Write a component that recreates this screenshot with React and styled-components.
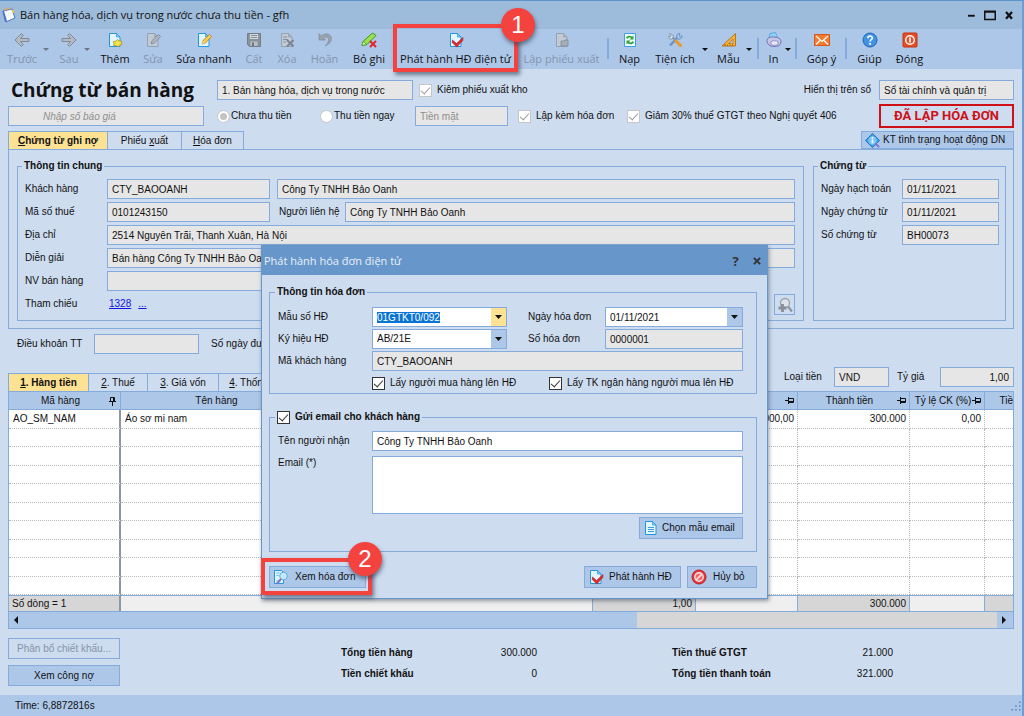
import { useEffect, useRef } from "react";
import styled, { createGlobalStyle } from "styled-components";

const formFont = `"Liberation Sans", Arial, sans-serif`;
const uiFont = `"Open Sans", "Noto Sans", sans-serif`;

const GlobalStyle = createGlobalStyle`
  * {
    box-sizing: border-box;
  }
  body {
    margin: 0;
    color: #111;
    font-family: ${formFont};
    font-size: 10px;
    line-height: 14px;
  }
  button, input, select, textarea {
    margin: 0;
    color: inherit;
    font: inherit;
  }
  svg {
    flex: none;
  }
`;

const Window = styled.div`
  position: relative;
  display: flex;
  flex-direction: column;
  min-height: 100vh;
  border-top: 1px solid #5f93cb;
  border-right: 2px solid #6f9cd2;
  background: #cddcef;
  overflow: hidden;
`;

const TitleBar = styled.header`
  display: flex;
  align-items: center;
  gap: 4px;
  height: 28px;
  padding: 0 4px 0 0;
  background: #9dbbda;
  font-family: ${uiFont};
  font-size: 11px;
`;

const WindowName = styled.span`
  flex: 1;
`;

const WindowButton = styled.button`
  display: flex;
  width: 15px;
  padding: 0;
  border: 0;
  background: none;
`;

const Toolbar = styled.nav`
  display: flex;
  height: 40px;
  padding-left: 1px;
  background: #adc7e9;
  font-family: ${uiFont};
  font-size: 11px;
`;

const ToolWrap = styled.div`
  position: relative;
  width: ${props => props.$width}px;
`;

const ToolButton = styled.button`
  display: flex;
  flex-direction: column;
  align-items: center;
  gap: 4px;
  width: 100%;
  height: 100%;
  padding: 3px 0 0;
  border: 0;
  background: none;
  white-space: nowrap;

  &:disabled {
    color: #8594aa;
  }
`;

const ToolCaret = styled.button`
  width: ${props => props.$width}px;
  padding: 0;
  border: 0;
  background: none;

  &::before {
    content: "";
    display: block;
    width: 0;
    border: 3px solid transparent;
    border-top-color: ${props => (props.$muted ? "#6b7787" : "#111")};
    border-bottom: 0;
  }
`;

const ToolSeparator = styled.div`
  width: ${props => props.$width}px;

  &::before {
    content: "";
    display: block;
    width: 2px;
    height: 21px;
    margin: 9px auto 0;
    background: #84abdc;
  }
`;

const Callout = styled.div`
  position: absolute;
  z-index: 2;
  inset: ${props => props.$inset};
  border: 4px solid #f4433f;
  box-shadow: 2px 3px 4px rgba(50, 60, 80, 0.6);
  pointer-events: none;
`;

const CalloutNumber = styled.span`
  position: absolute;
  top: -20px;
  right: ${props => props.$right}px;
  width: 34px;
  height: 34px;
  border-radius: 50%;
  background: #f4433f;
  box-shadow: 1px 3px 4px rgba(50, 60, 80, 0.6);
  color: #fff;
  font-size: 24px;
  line-height: 34px;
  font-family: ${formFont};
  text-align: center;
`;

const Main = styled.main`
  flex: 1;
  display: flex;
  flex-direction: column;
  padding: 9px 8px;
`;

const HeadRow = styled.div`
  display: flex;
  align-items: center;
  height: 24px;
  margin-bottom: 2px;
  white-space: nowrap;
`;

const PageTitle = styled.h1`
  width: 209px;
  margin: 0;
  padding-left: 3px;
  font-family: ${uiFont};
  font-size: 19px;
  line-height: 24px;
`;

const Field = styled.input`
  flex: ${props => (props.$width ? "none" : "1")};
  width: ${props => (props.$width ? `${props.$width}px` : "auto")};
  min-width: 0;
  height: 20px;
  padding: 0 4px;
  border: 1px solid #84abdc;
  border-radius: 0;
  outline: 0;
  background: ${props => (props.$editable ? "#fff" : "#e6e6e6")};
  text-align: ${props => props.$align || "left"};

  &::placeholder {
    color: #8f8f8f;
    opacity: 1;
  }
  &::selection {
    background: #0a74d4;
    color: #fff;
  }
`;

const QuoteField = styled(Field)`
  margin-right: 13px;
  padding-left: 34px;
  font-style: italic;
`;

const Choice = styled.label`
  display: flex;
  align-items: center;
  gap: ${props => props.$gap || 5}px;
  min-width: ${props => props.$width || 0}px;
`;

const CheckBox = styled.input`
  appearance: none;
  flex: none;
  width: 13px;
  height: 13px;
  border: 1px solid #333;
  background: #fff;

  &:checked::before {
    content: "";
    display: block;
    width: 8px;
    height: 4px;
    margin: 2px 0 0 1px;
    border: solid #333;
    border-width: 0 0 1px 1px;
    transform: rotate(-48deg);
  }
  &:disabled {
    border-color: #c6c6c6;
  }
  &:disabled::before {
    border-color: #999;
  }
`;

const Radio = styled.input`
  appearance: none;
  flex: none;
  width: 13px;
  height: 13px;
  padding: 2px;
  border: 1px solid #c3c6ca;
  border-radius: 50%;
  background: #fff;

  &:checked::before {
    content: "";
    display: block;
    width: 7px;
    height: 7px;
    border-radius: 50%;
    background: #c4c4c4;
  }
`;

const RightGroup = styled.div`
  display: flex;
  align-items: center;
  align-self: ${props => (props.$top ? "flex-start" : "center")};
  gap: 8px;
  margin-left: auto;
`;

const Stamp = styled.strong`
  width: 135px;
  margin-left: auto;
  border: 2px solid #cf1018;
  color: #cf1018;
  font-family: Roboto, sans-serif;
  font-size: 13px;
  line-height: 20px;
  text-align: center;
`;

const TabRow = styled.div`
  display: flex;
  align-items: flex-end;
  height: ${props => props.$height}px;
  margin-top: ${props => props.$top}px;
`;

const Tab = styled.button`
  width: ${props => props.$width}px;
  height: 18px;
  padding: 0;
  border: 1px solid #84abdc;
  border-width: 1px 1px 0 0;
  background: ${props => (props.$active ? "#fde293" : "#cddcef")};
  font-weight: ${props => (props.$active ? "bold" : "normal")};
  white-space: nowrap;

  &:first-child {
    border-left-width: 1px;
  }
`;

const ActionButton = styled.button`
  display: flex;
  align-items: center;
  justify-content: ${props => (props.$centered ? "center" : "flex-start")};
  gap: ${props => props.$gap || 3}px;
  width: ${props => props.$width}px;
  height: ${props => props.$height || 22}px;
  margin-left: ${props => (props.$push ? "auto" : 0)};
  padding: 0 3px;
  border: 1px solid #84abdc;
  background: #adc7e9;
  white-space: nowrap;

  &:disabled {
    background: #cddcef;
    color: #8594aa;
  }
`;

const TabPanel = styled.section`
  display: flex;
  gap: 9px;
  padding: 9px 7px 7px 8px;
  border: 1px solid #84abdc;
`;

const Group = styled.fieldset`
  flex: ${props => (props.$width ? "none" : "1")};
  width: ${props => (props.$width ? `${props.$width}px` : "auto")};
  min-width: 0;
  margin: 0;
  padding: ${props => props.$padding};
  border: 1px solid #84abdc;
`;

const Legend = styled.legend`
  display: flex;
  align-items: center;
  height: 14px;
  margin-left: -3px;
  padding: 0 2px;
  font-weight: bold;
  white-space: nowrap;
`;

const Rows = styled.div`
  display: grid;
  grid-template-columns: minmax(0, 1fr);
  gap: ${props => props.$gap || 2}px;
`;

const Row = styled.div`
  display: flex;
  align-items: center;
  height: 20px;
  white-space: nowrap;
`;

const Label = styled.label`
  flex: none;
  width: ${props => (props.$width ? `${props.$width}px` : "auto")};
  margin-left: ${props => props.$left || 0}px;
  white-space: nowrap;
`;

const Links = styled.div`
  display: flex;
  flex: 1;
  gap: 7px;
  padding-left: 2px;

  a {
    color: #1313e8;
  }
`;

const IconButton = styled.button`
  display: flex;
  width: 21px;
  height: 21px;
  padding: 2px;
  border: 1px solid #84abdc;
  background: #cddcef;
`;

const Gap = styled.span`
  flex: none;
  width: ${props => props.$width}px;
`;

const TermsRow = styled(Row)`
  margin-top: 5px;
  padding-left: 9px;
`;

const Grid = styled.section`
  flex: 1;
  display: flex;
  flex-direction: column;
  border: 1px solid #84abdc;
`;

const TableBox = styled.div`
  flex: 1;
  display: grid;
  overflow: hidden;
  background: #fff;
`;

const Table = styled.table`
  width: 100%;
  min-width: 1050px;
  height: 100%;
  border-spacing: 0;
  table-layout: fixed;

  th, td {
    height: 18px;
    padding: 0 3px 0 4px;
    overflow: hidden;
    white-space: nowrap;
  }
  th {
    border-right: 1px solid #84abdc;
    border-bottom: 1px solid #84abdc;
    background: #adc7e9;
    font-weight: normal;
  }
  tbody td {
    border-right: 1px dotted #b9b9b9;
    border-bottom: 1px dotted #b9b9b9;
  }
  tbody td:first-child {
    border-right: 2px solid #8f969e;
  }
  tfoot td {
    height: 16px;
    border-top: 1px solid #84abdc;
    border-right: 1px solid #84abdc;
    background: #efefef;
  }
`;

const HeadCell = styled.div`
  display: flex;
  align-items: center;

  span {
    flex: 1;
    text-align: center;
  }
`;

const NumberCell = styled.td`
  text-align: right;
`;

const SumCell = styled.td`
  &&& {
    background: #d6d6d6;
    text-align: right;
  }
`;

const CountCell = styled.td`
  &&& {
    padding-left: 3px;
    border-right: 2px solid #8f969e;
    background: #d6d6d6;
  }
`;

const ScrollBar = styled.div`
  display: flex;
  height: 17px;
  border-top: 1px solid #84abdc;
  background: #d6d6d6;
`;

const ScrollThumb = styled.div`
  flex: none;
  width: 61%;
  background: #adc7e9;
`;

const ScrollArrow = styled.button`
  flex: none;
  width: 16px;
  margin-left: ${props => (props.$back ? 0 : "auto")};
  padding: 0 5px;
  border: 0;
  background: #adc7e9;

  &::before {
    content: "";
    display: block;
    width: 0;
    border: solid transparent;
    border-width: ${props => (props.$back ? "4px 4px 4px 0" : "4px 0 4px 4px")};
    border-${props => (props.$back ? "right" : "left")}-color: #111;
  }
`;

const Bottom = styled.footer`
  display: flex;
  padding-top: 9px;
`;

const BottomButtons = styled.div`
  display: grid;
  gap: 6px;
`;

const Totals = styled.dl`
  display: grid;
  grid-template-columns: ${props => props.$label}px 80px;
  row-gap: 7px;
  margin: 8px 0 0 ${props => props.$left}px;
  align-content: start;

  dt {
    font-weight: bold;
    white-space: nowrap;
  }
  dd {
    margin: 0;
    text-align: right;
  }
`;

const StatusBar = styled.div`
  display: flex;
  align-items: center;
  justify-content: space-between;
  height: 21px;
  padding-left: 15px;
  background: #adc7e9;
`;

const Dialog = styled.section`
  position: absolute;
  top: 244px;
  left: 261px;
  width: 507px;
  border: 1px solid #6696ca;
  background: #cddcef;
  box-shadow: 1px 2px 4px rgba(50, 60, 80, 0.5);
`;

const DialogTitle = styled.header`
  display: flex;
  align-items: center;
  height: 29px;
  padding: 0 5px 0 2px;
  background: #6696ca;
  color: #e9f1fa;
  font-family: ${uiFont};
  font-size: 11px;

  h2 {
    flex: 1;
    margin: 0;
    font-size: 11px;
    font-weight: normal;
  }
`;

const DialogButton = styled.button`
  width: 11px;
  margin-left: 10px;
  padding: 0;
  border: 0;
  background: none;
  color: #333;
  font-size: 13px;
  font-weight: bold;
`;

const DialogBody = styled.div`
  padding: 10px 10px 10px 7px;
`;

const DialogSection = styled.div`
  display: flex;
  margin-bottom: ${props => props.$bottom}px;
`;

const Combo = styled.div`
  flex: none;
  position: relative;
  display: flex;
  width: ${props => props.$width}px;
  height: 20px;
  border: 1px solid #84abdc;
  background: #fff;
`;

const ComboInput = styled(Field)`
  height: 18px;
  border: 0;
`;

const ComboSelect = styled.select`
  appearance: none;
  flex: 1;
  padding: 0 4px;
  border: 0;
  border-radius: 0;
  background: linear-gradient(#adc7e9, #adc7e9) right / 15px 100% no-repeat;
`;

const ComboButton = styled.button`
  display: grid;
  place-items: center;
  width: 15px;
  padding: 0;
  border: 0;
  background: ${props => (props.$hot ? "#fde293" : "#adc7e9")};
`;

const SelectCaret = styled.span`
  position: absolute;
  right: 0;
  display: grid;
  place-items: center;
  width: 15px;
  height: 18px;
  pointer-events: none;
`;

const EmailBox = styled.textarea`
  flex: 1;
  height: 58px;
  border: 1px solid #84abdc;
  border-radius: 0;
  background: #fff;
  resize: none;
`;

const EmailRow = styled.div`
  display: flex;
  align-items: flex-start;
  margin: 3px 0 1px;
`;

const Actions = styled.div`
  display: flex;
  gap: 6px;
`;

const ButtonSpot = styled.div`
  position: relative;
  margin-right: auto;
`;

function Svg({ size = 16, children }) {
  return (
    <svg width={size} height={size} viewBox="0 0 16 16" fill="none" aria-hidden="true">
      {children}
    </svg>
  );
}

function Sheet({ muted }) {
  const line = muted ? "#96a1b0" : "#2496de";
  return (
    <>
      <path d="M2.5 1.5h7l3.5 3.5v9.5h-10.5z" fill={muted ? "#c2cad5" : "#e3f5ff"} stroke={line} />
      <path d="M9.5 1.5v3.5h3.5z" fill={muted ? "#a9b3c0" : "#8fd0f5"} stroke={line} strokeWidth=".7" />
    </>
  );
}

const icons = {
  app: (
    <Svg>
      <path d="M3 4l9-2 3 9-9 4z" fill="#f4f9ff" stroke="#4b72c9" />
      <path d="M2.500 4l2.500 11 2-1-3-10z" fill="#4f6fd0" />
      <path d="M4.500 3.600l1-2M7 3l1-2M9.500 2.500l1-2" stroke="#e5a93d" strokeWidth="1.200" />
      <path d="M12.500 3l1 3" stroke="#f1c24d" strokeWidth="2" />
    </Svg>
  ),
  back: (
    <Svg>
      <path d="M7.500 1.500L1 8l6.500 6.500 1.800-1.800L6.500 9.500H15v-3H6.500l2.800-3.200z" fill="#b4bbc5" stroke="#7f8894" />
    </Svg>
  ),
  next: (
    <Svg>
      <path d="M8.500 1.500L15 8l-6.500 6.500-1.800-1.800 2.800-3.200H1v-3h8.500L6.700 3.300z" fill="#b4bbc5" stroke="#7f8894" />
    </Svg>
  ),
  add: (
    <Svg>
      <Sheet />
      <path d="M10.500 7.500l1.500 1.400 2.600.2-.5 2 1 1.400-2.400.7-1.600 1.600-1.900-1.300-2.600.1.500-2.100-1-1.700 2.500-.6z" fill="#f6e34a" stroke="#a8951a" strokeWidth=".8" />
    </Svg>
  ),
  edit: (
    <Svg>
      <Sheet muted />
      <path d="M6 12l1-3.500 6.500-6 2 2-6 6.500z" fill="#adb5c0" stroke="#7f8894" strokeWidth=".8" />
    </Svg>
  ),
  quickEdit: (
    <Svg>
      <Sheet />
      <path d="M6 12l1-3.500 6.500-6 2 2-6 6.500z" fill="#f9cf4c" stroke="#b07c1b" strokeWidth=".8" />
      <path d="M6 12l1-3 2 2z" fill="#f6dcb2" />
    </Svg>
  ),
  save: (
    <Svg>
      <path d="M1.500 1.500h13v13h-11l-2-2z" fill="#8a929c" stroke="#747d88" />
      <path d="M4 2h8v5H4z" fill="#cfd5dd" />
      <path d="M5 3.500h6M5 5.500h6" stroke="#8a929c" />
      <path d="M4.500 9.500h7V14h-7z" fill="#b7bec8" />
      <path d="M6 10.500h2V14H6z" fill="#6d7682" />
    </Svg>
  ),
  remove: (
    <Svg>
      <Sheet muted />
      <path d="M4 5h4M4 7.500h5M4 10h3" stroke="#8a929c" />
      <path d="M8 8l6.500 6.500M14.500 8L8 14.500" stroke="#7b8490" strokeWidth="2" />
    </Svg>
  ),
  undo: (
    <Svg>
      <path d="M2 1.500v6.500h6.500L6.400 5.900C9.500 4 12 5.500 11.500 8.500c-.3 2-1.800 4-3.500 5.500 4-1.500 6.800-4.500 6.500-7.700C14 2 8.500.300 4.400 3.900z" fill="#9aa2ad" stroke="#828b97" strokeWidth=".7" />
    </Svg>
  ),
  unpost: (
    <Svg>
      <path d="M1 13.500l1-4L11.500 1l3.500 2.500-9 9z" fill="#9be04e" stroke="#3a9a1c" />
      <path d="M1 13.500l1-4 4 3z" fill="#d9f2c0" stroke="#3a9a1c" strokeWidth=".7" />
      <path d="M9 9l6 6M15 9l-6 6" stroke="#e3262c" strokeWidth="2" />
    </Svg>
  ),
  publish: (
    <Svg>
      <Sheet />
      <path d="M4.500 8l4 3.500 6.500-6-.2 3-6 6.500L4.200 10.500z" fill="#e32b30" stroke="#a3151b" strokeWidth=".6" />
    </Svg>
  ),
  issue: (
    <Svg>
      <Sheet muted />
      <path d="M7 9h3l1-1h3v6H7z" fill="#a7afba" stroke="#7f8894" strokeWidth=".8" />
    </Svg>
  ),
  refresh: (
    <Svg>
      <path d="M2.500 1.500h11v13h-11z" fill="#f2fbff" stroke="#3aa0df" />
      <path d="M11.500 3.500v4h-4l1.500-1.500c-1.500-1-3-.3-3.800 1L4 5.500c1.500-2 4.300-2.400 6.200-.8z" fill="#2fa534" />
      <path d="M4.500 12.500v-4h4L7 10c1.500 1 3 .3 3.800-1l1.200 1.500c-1.500 2-4.300 2.400-6.200.8z" fill="#2fa534" />
    </Svg>
  ),
  tools: (
    <Svg>
      <path d="M3 13.500L11 5" stroke="#6c95c5" strokeWidth="2.500" />
      <path d="M10 2.500c2-1.500 3-1 3-1l-1 2.300 1.400 1L15 3.500s.300 2.500-2 3.500-4-2-3-4.500z" fill="#a8c7e8" stroke="#507fb5" strokeWidth=".7" />
      <path d="M6 6c1-2.500-1-4.500-3.500-4.200L4 3.500 3.200 5 1.500 4.500C1.500 7 4 8 6 6z" fill="#dbe2ea" stroke="#6d7f95" strokeWidth=".7" />
      <path d="M5.500 5.500l3 3" stroke="#8796aa" strokeWidth="2" />
      <path d="M9 9l4.500 4.500" stroke="#e99b25" strokeWidth="3" strokeLinecap="round" />
    </Svg>
  ),
  template: (
    <Svg>
      <path d="M1 14L14.500 1.500V14z" fill="#f4b13c" stroke="#bc7714" />
      <path d="M7.500 11.500l4.500-4.500v4.500z" fill="#adc7e9" stroke="#bc7714" strokeWidth=".8" />
      <path d="M4 14v-2M6.500 14v-1.500M9 14v-1.500M11.500 14v-1.500" stroke="#8a5208" strokeWidth=".7" />
    </Svg>
  ),
  print: (
    <Svg>
      <path d="M3 6l1-4.500 5.500-1 2 5z" fill="#8fd0f5" stroke="#4a9fdc" strokeWidth=".8" />
      <path d="M1 8.500C1 6 3.500 5 6.500 5s8.500.5 8.500 4.500-3 5-7 5-7-2-7-6z" fill="#c5c5e8" stroke="#7574b4" />
      <path d="M5 9.500c2-1 5-1 7 0v3c-2 1-5 1-7 0z" fill="#e9e9fa" stroke="#7574b4" strokeWidth=".7" />
    </Svg>
  ),
  mail: (
    <Svg>
      <path d="M.500 2.500h15v11H.500z" fill="#f47a2c" stroke="#d9571a" />
      <path d="M2 4l6 5.500L14 4M2 12.500l4-4M14 12.500l-4-4" stroke="#fff" strokeWidth="1.200" />
    </Svg>
  ),
  help: (
    <Svg>
      <circle cx="8" cy="8" r="7" fill="#4393e4" stroke="#2065b5" />
      <path d="M5.800 6.300C5.800 3.200 10.400 3.400 10.300 6c0 1.700-2.200 1.700-2.200 3.500" stroke="#fff" strokeWidth="1.600" />
      <circle cx="8.100" cy="11.800" r="1.100" fill="#fff" />
    </Svg>
  ),
  power: (
    <Svg>
      <rect x="1" y="1" width="14" height="14" rx="1" fill="#e84c25" stroke="#c2330f" />
      <circle cx="8" cy="8" r="4.300" stroke="#fff" strokeWidth="1.500" />
      <path d="M8 5.500v5" stroke="#fff" strokeWidth="1.700" />
    </Svg>
  ),
  info: (
    <Svg size={15}>
      <path d="M8 .500L15.500 8 8 15.500.500 8z" fill="#3d9fe8" stroke="#1d6fbe" strokeLinejoin="round" />
      <circle cx="8" cy="8" r="4.500" fill="#7cc4f5" />
      <path d="M8 7v4" stroke="#fff" strokeWidth="1.800" />
      <circle cx="8" cy="5" r="1.100" fill="#fff" />
      <path d="M11 11l4 4" stroke="#7d72c9" strokeWidth="2" />
    </Svg>
  ),
  zoomAdd: (
    <Svg>
      <circle cx="8" cy="6" r="4.500" fill="#dde3ea" stroke="#98a1ad" strokeWidth="1.300" />
      <path d="M11 9.500l4 5" stroke="#8d959f" strokeWidth="2.200" />
      <path d="M5.500 7v8M1.500 11h8" stroke="#868e98" strokeWidth="2.800" />
    </Svg>
  ),
  note: (
    <Svg>
      <Sheet />
      <path d="M5 7.500h6M5 9.500h6M5 11.500h6" stroke="#3aa0df" />
    </Svg>
  ),
  preview: (
    <Svg>
      <path d="M1.500 1.500h7l2 2v11h-9z" fill="#dff3ff" stroke="#2496de" />
      <path d="M3.500 4h3M3.500 6.500h2M3.500 12h3" stroke="#66b8ea" />
      <circle cx="10.500" cy="7" r="3.800" fill="#c6e9fc" stroke="#58aee3" />
      <path d="M8 10l-4 4.500" stroke="#8472d3" strokeWidth="2" />
    </Svg>
  ),
  cancel: (
    <Svg>
      <circle cx="8" cy="8" r="7" fill="#e2383e" stroke="#c01f26" />
      <circle cx="8" cy="8" r="4.200" fill="#ee6a6e" stroke="#fbe3e3" strokeWidth="1.400" />
      <path d="M5 11l6-6" stroke="#fbe3e3" strokeWidth="1.700" />
    </Svg>
  ),
};

function Pin({ upright }) {
  return (
    <svg width="9" height="10" viewBox="0 0 9 10" fill="none" stroke="#111" aria-hidden="true">
      {upright ? (
        <path d="M2.500 5.500v-4h4v4M5.500 1.500v4M1 5.500h7M4.500 6v4" />
      ) : (
        <path d="M3.500 2.500h5v4h-5M3.500 1v7M0 4.500h3.500M4 5.500h5" />
      )}
    </svg>
  );
}

function Caret() {
  return (
    <svg width="7" height="4" viewBox="0 0 7 4" aria-hidden="true">
      <path d="M0 0h7L3.500 4z" fill="#111" />
    </svg>
  );
}

const tools = [
  { name: "Trước", icon: "back", width: 42, disabled: true },
  { caret: true, width: 11, disabled: true },
  { name: "Sau", icon: "next", width: 30, disabled: true },
  { caret: true, width: 10, disabled: true },
  { name: "Thêm", icon: "add", width: 42 },
  { name: "Sửa", icon: "edit", width: 34, disabled: true },
  { name: "Sửa nhanh", icon: "quickEdit", width: 68 },
  { name: "Cất", icon: "save", width: 32, disabled: true },
  { name: "Xóa", icon: "remove", width: 34, disabled: true },
  { name: "Hoãn", icon: "undo", width: 41, disabled: true },
  { name: "Bỏ ghi", icon: "unpost", width: 48 },
  { name: "Phát hành HĐ điện tử", icon: "publish", width: 125, step: 1 },
  { name: "Lập phiếu xuất", icon: "issue", width: 87, disabled: true },
  { separator: true, width: 6 },
  { name: "Nạp", icon: "refresh", width: 37 },
  { name: "Tiện ích", icon: "tools", width: 54 },
  { caret: true, width: 9 },
  { name: "Mẫu", icon: "template", width: 35 },
  { caret: true, width: 8 },
  { separator: true, width: 8 },
  { name: "In", icon: "print", width: 23 },
  { caret: true, width: 7 },
  { separator: true, width: 8 },
  { name: "Góp ý", icon: "mail", width: 43 },
  { separator: true, width: 6 },
  { name: "Giúp", icon: "help", width: 41 },
  { name: "Đóng", icon: "power", width: 39 },
];

function Tool({ tool }) {
  if (tool.separator) return <ToolSeparator $width={tool.width} />;
  if (tool.caret) return <ToolCaret $width={tool.width} $muted={tool.disabled} aria-label="Mở danh sách" />;
  return (
    <ToolWrap $width={tool.width}>
      <ToolButton disabled={tool.disabled}>
        {icons[tool.icon]}
        {tool.name}
      </ToolButton>
      {tool.step && (
        <Callout $inset="-5px 0 -3px 0">
          <CalloutNumber $right={-21}>{tool.step}</CalloutNumber>
        </Callout>
      )}
    </ToolWrap>
  );
}

function Header() {
  return (
    <>
      <HeadRow>
        <PageTitle>Chứng từ bán hàng</PageTitle>
        <Field $width={196} readOnly aria-label="Loại chứng từ" defaultValue="1. Bán hàng hóa, dịch vụ trong nước" />
        <Gap $width={6} />
        <Choice>
          <CheckBox type="checkbox" defaultChecked disabled />
          Kiêm phiếu xuất kho
        </Choice>
        <RightGroup>
          <Label htmlFor="book">Hiển thị trên sổ</Label>
          <Field id="book" $width={135} readOnly defaultValue="Sổ tài chính và quản trị" />
        </RightGroup>
      </HeadRow>
      <HeadRow>
        <QuoteField $width={196} placeholder="Nhập số báo giá" aria-label="Số báo giá" />
        <Choice $width={103} $gap={1}>
          <Radio type="radio" name="payment" defaultChecked disabled />
          Chưa thu tiền
        </Choice>
        <Choice $width={95} $gap={1}>
          <Radio type="radio" name="payment" disabled />
          Thu tiền ngay
        </Choice>
        <Field $width={93} disabled placeholder="Tiền mặt" aria-label="Hình thức thu" />
        <Gap $width={10} />
        <Choice $width={109}>
          <CheckBox type="checkbox" defaultChecked disabled />
          Lập kèm hóa đơn
        </Choice>
        <Choice>
          <CheckBox type="checkbox" defaultChecked disabled />
          Giảm 30% thuế GTGT theo Nghị quyết 406
        </Choice>
        <Stamp>ĐÃ LẬP HÓA ĐƠN</Stamp>
      </HeadRow>
    </>
  );
}

function Voucher() {
  return (
    <>
      <TabRow $height={18} $top={1}>
        <Tab $width={100} $active><u>C</u>hứng từ ghi nợ</Tab>
        <Tab $width={74}>Phiếu <u>x</u>uất</Tab>
        <Tab $width={62}><u>H</u>óa đơn</Tab>
        <ActionButton $width={153} $height={18} $push>
          {icons.info}
          KT tình trạng hoạt động DN
        </ActionButton>
      </TabRow>
      <TabPanel>
        <Group $padding="6px 8px 6px 7px">
          <Legend>Thông tin chung</Legend>
          <Rows $gap={3}>
            <Row>
              <Label $width={82} htmlFor="customer">Khách hàng</Label>
              <Field id="customer" $width={163} readOnly defaultValue="CTY_BAOOANH" />
              <Gap $width={7} />
              <Field readOnly aria-label="Tên khách hàng" defaultValue="Công Ty TNHH Bảo Oanh" />
            </Row>
            <Row>
              <Label $width={82} htmlFor="tax">Mã số thuế</Label>
              <Field id="tax" $width={163} readOnly defaultValue="0101243150" />
              <Label $width={66} $left={9} htmlFor="contact">Người liên hệ</Label>
              <Field id="contact" readOnly defaultValue="Công Ty TNHH Bảo Oanh" />
            </Row>
            <Row>
              <Label $width={82} htmlFor="address">Địa chỉ</Label>
              <Field id="address" readOnly defaultValue="2514 Nguyễn Trãi, Thanh Xuân, Hà Nội" />
            </Row>
            <Row>
              <Label $width={82} htmlFor="note">Diễn giải</Label>
              <Field id="note" readOnly defaultValue="Bán hàng Công Ty TNHH Bảo Oanh" />
            </Row>
            <Row>
              <Label $width={82} htmlFor="seller">NV bán hàng</Label>
              <Field id="seller" $width={163} readOnly />
            </Row>
            <Row>
              <Label as="span" $width={82}>Tham chiếu</Label>
              <Links>
                <a href="#1328">1328</a>
                <a href="#more">...</a>
              </Links>
              <IconButton aria-label="Tìm thêm">{icons.zoomAdd}</IconButton>
            </Row>
          </Rows>
        </Group>
        <Group $width={193} $padding="6px 6px 6px 7px">
          <Legend>Chứng từ</Legend>
          <Rows $gap={3}>
            <Row>
              <Label $width={81} htmlFor="posted">Ngày hạch toán</Label>
              <Field id="posted" readOnly defaultValue="01/11/2021" />
            </Row>
            <Row>
              <Label $width={81} htmlFor="dated">Ngày chứng từ</Label>
              <Field id="dated" readOnly defaultValue="01/11/2021" />
            </Row>
            <Row>
              <Label $width={81} htmlFor="number">Số chứng từ</Label>
              <Field id="number" readOnly defaultValue="BH00073" />
            </Row>
          </Rows>
        </Group>
      </TabPanel>
      <TermsRow>
        <Label $width={77} htmlFor="terms">Điều khoản TT</Label>
        <Field id="terms" $width={105} readOnly />
        <Label $left={12}>Số ngày được nợ</Label>
      </TermsRow>
    </>
  );
}

function Items() {
  return (
    <>
      <TabRow $height={24} $top={13}>
        <Tab $width={81} $active><u>1</u>. Hàng tiền</Tab>
        <Tab $width={59}><u>2</u>. Thuế</Tab>
        <Tab $width={71}><u>3</u>. Giá vốn</Tab>
        <Tab $width={74}><u>4</u>. Thống kê</Tab>
        <RightGroup $top>
          <Label $width={42} htmlFor="currency">Loại tiền</Label>
          <Field id="currency" $width={55} readOnly defaultValue="VND" />
          <Label $width={35} htmlFor="rate">Tỷ giá</Label>
          <Field id="rate" $width={74} $align="right" readOnly defaultValue="1,00" />
        </RightGroup>
      </TabRow>
      <Grid>
        <TableBox>
          <Table>
            <colgroup>
              {[112, 200, 136, 136, 103, 102, 112, 75, 74].map((width, i) => (
                <col key={i} width={width} />
              ))}
            </colgroup>
            <thead>
              <tr>
                {["Mã hàng", "Tên hàng", "Kho", "ĐVT", "Số lượng", "Đơn giá", "Thành tiền", "Tỷ lệ CK (%)", "Tiền CK"].map((name, i) => (
                  <th key={name}>
                    <HeadCell>
                      <span>{name}</span>
                      <Pin upright={i === 0} />
                    </HeadCell>
                  </th>
                ))}
              </tr>
            </thead>
            <tbody>
              <tr>
                <td>AO_SM_NAM</td>
                <td>Áo sơ mi nam</td>
                <td />
                <td />
                <NumberCell>1,00</NumberCell>
                <NumberCell>300.000,00</NumberCell>
                <NumberCell>300.000</NumberCell>
                <NumberCell>0,00</NumberCell>
                <td />
              </tr>
              {Array.from({ length: 9 }, (_, row) => (
                <tr key={row}>
                  {Array.from({ length: 9 }, (_, cell) => <td key={cell} />)}
                </tr>
              ))}
            </tbody>
            <tfoot>
              <tr>
                <CountCell>Số dòng = 1</CountCell>
                <td colSpan={3} />
                <SumCell>1,00</SumCell>
                <td />
                <SumCell>300.000</SumCell>
                <td />
                <SumCell />
              </tr>
            </tfoot>
          </Table>
        </TableBox>
        <ScrollBar>
          <ScrollArrow $back aria-label="Cuộn trái" />
          <ScrollThumb />
          <ScrollArrow aria-label="Cuộn phải" />
        </ScrollBar>
      </Grid>
    </>
  );
}

function InvoiceDialog() {
  const formRef = useRef(null);

  useEffect(() => {
    formRef.current.focus();
    formRef.current.select();
  }, []);

  return (
    <Dialog role="dialog" aria-labelledby="dialog-title">
      <DialogTitle>
        <h2 id="dialog-title">Phát hành hóa đơn điện tử</h2>
        <DialogButton>?</DialogButton>
        <DialogButton aria-label="Đóng">
          <Svg size={10}><path d="M3 3l10 10M13 3L3 13" stroke="#333" strokeWidth="3" /></Svg>
        </DialogButton>
      </DialogTitle>
      <DialogBody>
        <DialogSection $bottom={16}>
          <Group $padding="8px 13px 0 8px">
            <Legend>Thông tin hóa đơn</Legend>
            <Rows>
              <Row>
                <Label $width={94} htmlFor="form">Mẫu số HĐ</Label>
                <Combo $width={135}>
                  <ComboInput id="form" ref={formRef} $editable role="combobox" aria-expanded="false" defaultValue="01GTKT0/092" />
                  <ComboButton $hot aria-label="Chọn mẫu số"><Caret /></ComboButton>
                </Combo>
                <Label $left={21} $width={77} htmlFor="date">Ngày hóa đơn</Label>
                <Combo $width={138}>
                  <ComboInput id="date" $editable defaultValue="01/11/2021" />
                  <ComboButton aria-label="Chọn ngày"><Caret /></ComboButton>
                </Combo>
              </Row>
              <Row>
                <Label $width={94} htmlFor="sign">Ký hiệu HĐ</Label>
                <Combo $width={135}>
                  <ComboSelect id="sign">
                    <option>AB/21E</option>
                  </ComboSelect>
                  <SelectCaret><Caret /></SelectCaret>
                </Combo>
                <Label $left={21} $width={77} htmlFor="invoice">Số hóa đơn</Label>
                <Field id="invoice" $width={138} readOnly defaultValue="0000001" />
              </Row>
              <Row>
                <Label $width={94} htmlFor="code">Mã khách hàng</Label>
                <Field id="code" readOnly defaultValue="CTY_BAOOANH" />
              </Row>
              <Row>
                <Gap $width={94} />
                <Choice $width={177}>
                  <CheckBox type="checkbox" defaultChecked />
                  Lấy người mua hàng lên HĐ
                </Choice>
                <Choice>
                  <CheckBox type="checkbox" defaultChecked />
                  Lấy TK ngân hàng người mua lên HĐ
                </Choice>
              </Row>
            </Rows>
          </Group>
        </DialogSection>
        <DialogSection $bottom={14}>
          <Group $padding="7px 13px 12px 8px">
            <Legend>
              <Choice>
                <CheckBox type="checkbox" defaultChecked />
                Gửi email cho khách hàng
              </Choice>
            </Legend>
            <Rows>
              <Row>
                <Label $width={94} htmlFor="receiver">Tên người nhận</Label>
                <Field id="receiver" $editable defaultValue="Công Ty TNHH Bảo Oanh" />
              </Row>
              <EmailRow>
                <Label $width={94} htmlFor="email">Email (*)</Label>
                <EmailBox id="email" />
              </EmailRow>
              <ActionButton $width={104} $push>
                {icons.note}
                Chọn mẫu email
              </ActionButton>
            </Rows>
          </Group>
        </DialogSection>
        <Actions>
          <ButtonSpot>
            <ActionButton $width={97} $gap={6}>
              {icons.preview}
              Xem hóa đơn
            </ActionButton>
            <Callout $inset="-8px -6px -7px -8px">
              <CalloutNumber $right={-14}>2</CalloutNumber>
            </Callout>
          </ButtonSpot>
          <ActionButton $width={97} $gap={5}>
            {icons.publish}
            Phát hành HĐ
          </ActionButton>
          <ActionButton $width={70} $gap={6}>
            {icons.cancel}
            Hủy bỏ
          </ActionButton>
        </Actions>
      </DialogBody>
    </Dialog>
  );
}

function App() {
  return (
    <>
      <GlobalStyle />
      <Window>
        <TitleBar>
          {icons.app}
          <WindowName>Bán hàng hóa, dịch vụ trong nước chưa thu tiền - gfh</WindowName>
          <WindowButton aria-label="Thu nhỏ">
            <Svg size={12}><path d="M4 9h9" stroke="#111" strokeWidth="2.500" /></Svg>
          </WindowButton>
          <WindowButton aria-label="Phóng to">
            <Svg size={12}><path d="M1 3h14v11H1zM1 4h14" stroke="#111" strokeWidth="2" /></Svg>
          </WindowButton>
          <WindowButton aria-label="Đóng">
            <Svg size={12}><path d="M4 4l8 9M12 4l-8 9" stroke="#111" strokeWidth="3" /></Svg>
          </WindowButton>
        </TitleBar>
        <Toolbar>
          {tools.map((tool, i) => <Tool key={i} tool={tool} />)}
        </Toolbar>
        <Main>
          <Header />
          <Voucher />
          <Items />
          <Bottom>
            <BottomButtons>
              <ActionButton $width={112} $height={21} $centered disabled>Phân bổ chiết khấu...</ActionButton>
              <ActionButton $width={112} $height={21} $centered>Xem công nợ</ActionButton>
            </BottomButtons>
            <Totals $left={221} $label={116}>
              <dt>Tổng tiền hàng</dt>
              <dd>300.000</dd>
              <dt>Tiền chiết khấu</dt>
              <dd>0</dd>
            </Totals>
            <Totals $left={135} $label={141}>
              <dt>Tiền thuế GTGT</dt>
              <dd>21.000</dd>
              <dt>Tổng tiền thanh toán</dt>
              <dd>321.000</dd>
            </Totals>
          </Bottom>
        </Main>
        <StatusBar>
          Time: 6,8872816s
          <Svg size={12}>
            <path d="M12 2h2v2h-2zM12 7h2v2h-2zM7 7h2v2H7zM12 12h2v2h-2zM7 12h2v2H7zM2 12h2v2H2z" fill="#5f86b8" />
          </Svg>
        </StatusBar>
        <InvoiceDialog />
      </Window>
    </>
  );
}

export default App;
